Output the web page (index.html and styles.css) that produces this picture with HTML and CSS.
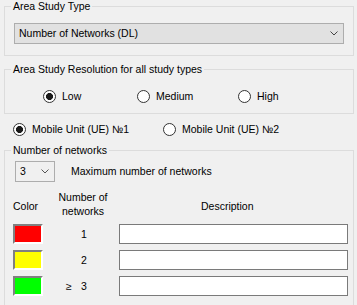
FILE: index.html
```html
<!DOCTYPE html>
<html lang="en">
<head>
    <meta charset="UTF-8">
    <meta name="viewport" content="width=device-width, initial-scale=1.0">
    <title>Area Study Settings</title>
    <link rel="stylesheet" href="styles.css">
</head>
<body>
    <fieldset class="group">
        <legend>Area Study Type</legend>
        <div class="type-body">
            <div class="combo">
                <span>Number of Networks (DL)</span>
                <svg class="chevron" width="8" height="5" viewBox="0 0 8 5"><path d="M0.5 0.5 L4 4 L7.5 0.5" fill="none" stroke="#444" stroke-width="1"/></svg>
            </div>
        </div>
    </fieldset>

    <fieldset class="group resolution">
        <legend>Area Study Resolution for all study types</legend>
        <div class="res-body">
            <label class="opt"><input type="radio" name="res" checked> Low</label>
            <label class="opt"><input type="radio" name="res"> Medium</label>
            <label class="opt"><input type="radio" name="res"> High</label>
        </div>
    </fieldset>

    <div class="units">
        <label class="opt"><input type="radio" name="unit" checked> Mobile Unit (UE) №1</label>
        <label class="opt"><input type="radio" name="unit"> Mobile Unit (UE) №2</label>
    </div>

    <fieldset class="group networks">
        <legend>Number of networks</legend>
        <div class="net-body">
            <div class="count-row">
                <div class="count">
                    <span>3</span>
                    <svg class="chevron" width="8" height="5" viewBox="0 0 8 5"><path d="M0.5 0.5 L4 4 L7.5 0.5" fill="none" stroke="#555" stroke-width="1"/></svg>
                </div>
                <span>Maximum number of networks</span>
            </div>
            <div class="net-table">
                <div class="head head-color">Color</div>
                <div class="head head-num">Number of<br>networks</div>
                <div class="head head-desc">Description</div>

                <div class="swatch" style="background: #ff0000"></div>
                <div class="num"><span class="sign"></span>1</div>
                <input type="text" class="desc">

                <div class="swatch" style="background: #ffff00"></div>
                <div class="num"><span class="sign"></span>2</div>
                <input type="text" class="desc">

                <div class="swatch" style="background: #00ff00"></div>
                <div class="num"><span class="sign">≥</span>3</div>
                <input type="text" class="desc">
            </div>
        </div>
    </fieldset>
</body>
</html>
```

FILE: styles.css
```css
html, body {
    margin: 0;
    height: 305px;
    overflow: hidden;
}

body {
    background: #f0f0f0;
    color: #000;
    font-family: "Liberation Sans", Arial, sans-serif;
    font-size: 10.5px;
    line-height: 13px;
}

.group {
    box-sizing: border-box;
    width: 350px;
    margin: 0 0 0 4px;
    padding: 0;
    border: 1px solid #dcdcdc;
    min-inline-size: 0;
}

.group legend {
    margin-left: 6px;
    padding: 0 2px;
    line-height: 13px;
}

/* area study type */
.type-body {
    padding: 10px 9px 11px 9px;
}

.combo {
    box-sizing: border-box;
    height: 21px;
    display: flex;
    align-items: center;
    justify-content: space-between;
    padding: 0 5px 0 4px;
    background: #e1e1e1;
    border: 1px solid #adadad;
}

.chevron {
    display: block;
}

/* resolution */
.resolution {
    margin-top: 7px;
}

.res-body {
    display: grid;
    grid-template-columns: 94px 101px auto;
    padding: 14px 0 10px 38px;
}

.opt {
    display: flex;
    align-items: center;
    gap: 6px;
    height: 13px;
}

.opt input {
    appearance: none;
    -webkit-appearance: none;
    box-sizing: border-box;
    width: 13px;
    height: 13px;
    margin: 0;
    border: 1px solid #333;
    border-radius: 50%;
    background: #fff;
}

.opt input:checked {
    background: radial-gradient(circle, #1a1a1a 0, #1a1a1a 3.2px, #fff 3.8px);
}

/* mobile units */
.units {
    display: grid;
    grid-template-columns: 150px auto;
    margin-top: 9px;
    padding-left: 13px;
}

/* number of networks */
.networks {
    margin-top: 8px;
}

.net-body {
    padding: 4px 9px 30px 8px;
}

.count-row {
    display: flex;
    align-items: center;
    gap: 16px;
    padding-left: 2px;
}

.count {
    box-sizing: border-box;
    width: 40px;
    height: 21px;
    display: flex;
    align-items: center;
    justify-content: space-between;
    padding: 0 5px 0 4px;
    border: 1px solid #adadad;
    background: #f0f0f0;
}

.net-table {
    display: grid;
    grid-template-columns: 34px 72px 229px;
    grid-template-rows: 28px 20px 20px 20px;
    row-gap: 6px;
    margin-top: 8px;
}

.head {
    line-height: 14px;
}

.head-color {
    padding-top: 9px;
}

.head-num {
    text-align: center;
}

.head-desc {
    padding: 9px 0 0 82px;
}

.swatch {
    box-sizing: border-box;
    width: 30px;
    height: 20px;
    border: 2px solid;
    border-color: #808080 #fff #fff #808080;
}

.num {
    display: flex;
    align-items: center;
    padding-left: 19px;
}

.sign {
    width: 15px;
}

.desc {
    box-sizing: border-box;
    width: 229px;
    height: 20px;
    margin: 0;
    padding: 0 3px;
    border: 1px solid #7a7a7a;
    background: #fff;
    font: inherit;
}
```
